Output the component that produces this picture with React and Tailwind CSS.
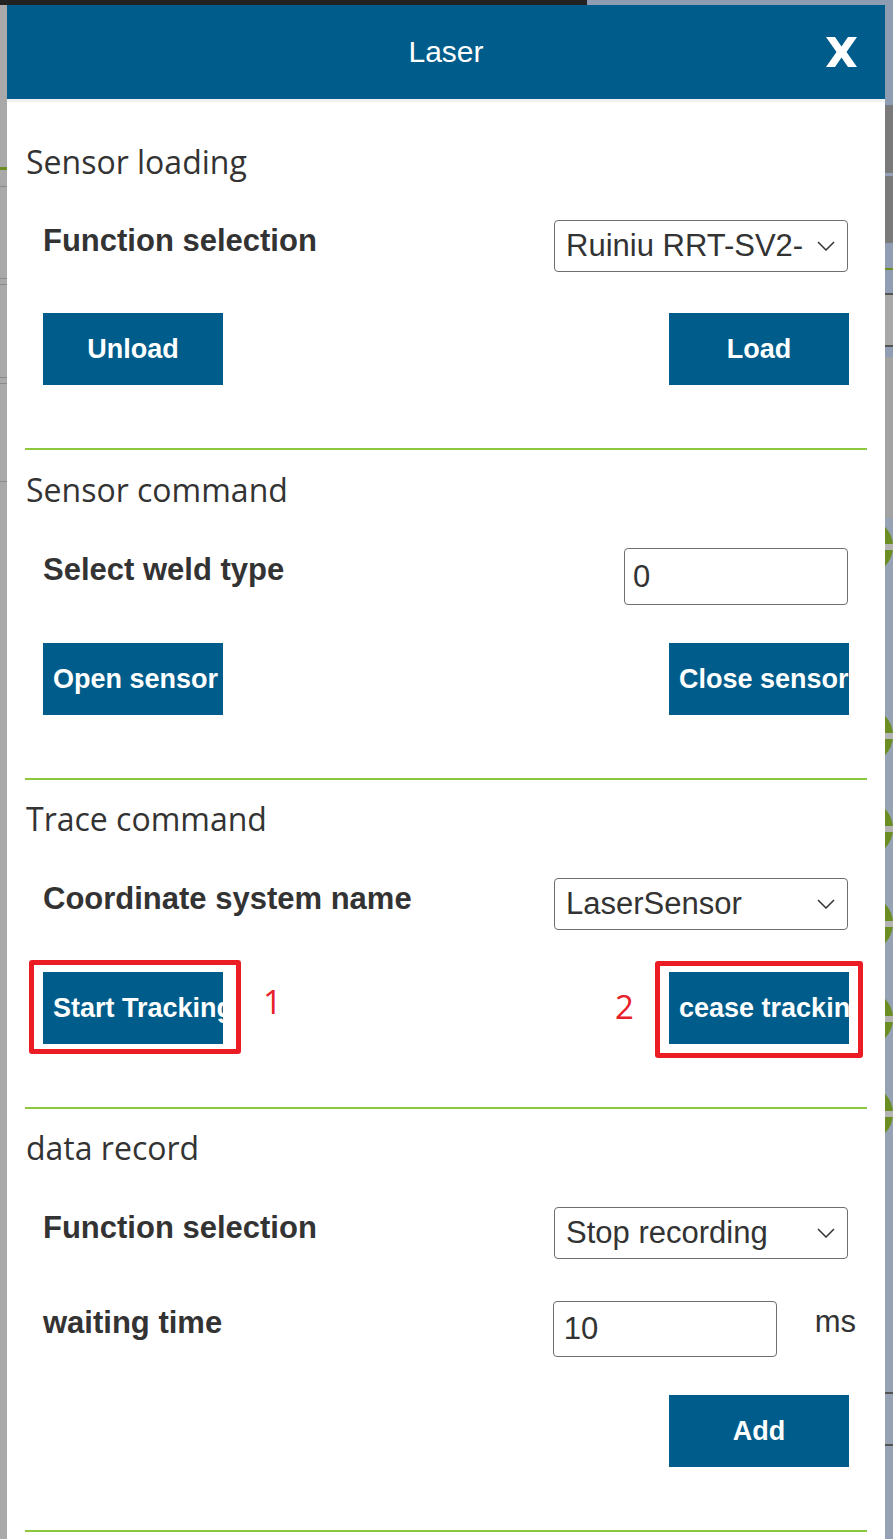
import React from 'react';

const sans = "font-['Liberation_Sans',Arial,sans-serif]";
const title = "font-['Open_Sans','Noto_Sans',sans-serif] text-[32px] leading-[40px] text-[#333] pl-px";
const label = `${sans} font-bold text-[31px] leading-[40px] text-[#333]`;

const Chevron = () => (
  <svg width="18" height="10" viewBox="0 0 18 10" className="shrink-0">
    <polyline points="1,1 9,9 17,1" fill="none" stroke="#333" strokeWidth="1.5" />
  </svg>
);

const Select = ({ value, className = '' }) => (
  <div className={`h-[52px] w-[294px] flex items-center pl-[11px] pr-[12px] border border-[#6e6e6e] rounded-[4px] bg-white ${className}`}>
    <span className={`flex-1 min-w-0 overflow-hidden whitespace-nowrap ${sans} text-[31px] leading-[40px] text-[#333]`}>{value}</span>
    <span className="w-[13px] shrink-0" />
    <Chevron />
  </div>
);

const Input = ({ value, className = '' }) => (
  <div className={`w-[224px] flex items-center border border-[#6e6e6e] rounded-[4px] bg-white ${sans} text-[31px] leading-[40px] text-[#333] ${className}`}>
    {value}
  </div>
);

const Button = ({ children }) => (
  <div className={`w-[180px] h-[72px] bg-[#005d8b] text-white font-bold text-[27px] leading-[72px] px-[10px] text-center whitespace-nowrap overflow-hidden ${sans}`}>
    {children}
  </div>
);

const Divider = ({ className = '' }) => <div className={`h-[2px] bg-[#8dc63f] ${className}`} />;

const Mark = ({ n, boxClass, numClass }) => (
  <>
    <div className={`absolute border-[5px] border-[#ec1c24] rounded-[3px] ${boxClass}`} />
    <div className={`absolute font-['Open_Sans',sans-serif] text-[33px] leading-[40px] text-[#e8202a] ${numClass}`}>{n}</div>
  </>
);

const RightStrip = () => (
  <div className="w-[8px] shrink-0 overflow-hidden flex flex-col bg-[#97a2b5]">
    <div className="h-[100px] shrink-0 bg-[#8f9db3]" />
    <div className="h-[68px] shrink-0 bg-[#7a7a7a]" />
    <div className="h-[3px] shrink-0 bg-[#95a0b3]" />
    <div className="h-[67px] shrink-0 bg-[#7a7a7a]" />
    <div className="h-[25px] shrink-0 bg-[#919db3]" />
    <div className="h-[2px] shrink-0 bg-[#6b8e23]" />
    <div className="h-[23px] shrink-0 bg-[#919db3]" />
    <div className="h-[2px] shrink-0 bg-[#555]" />
    <div className="h-[50px] shrink-0 bg-[#a8a8a8]" />
    <div className="h-[2px] shrink-0 bg-[#555]" />
    <div className="h-[10px] shrink-0 bg-[#919db3]" />
    <div className="h-[161px] shrink-0 bg-[#a3a3a3]" />
    {[0, 132, 36, 38, 38, 38].map((m, i) => (
      <div key={i} style={{ marginTop: m }} className="h-[57px] w-[57px] shrink-0 -ml-[49px] rounded-full bg-[#6b8e23] flex items-center">
        <div className="h-[6px] w-full bg-[#b4b4b4]" />
      </div>
    ))}
    <div className="mt-[250px] h-[2px] shrink-0 bg-[#555]" />
    <div className="mt-[50px] h-[2px] shrink-0 bg-[#555]" />
  </div>
);

const LeftStrip = () => (
  <div className="w-[7px] shrink-0 bg-[#a9a9a9] flex flex-col">
    <div className="mt-[162px] h-[3px] bg-[#6b8e23]" />
    <div className="mt-[16px] h-px bg-[#8a8a8a]" />
    <div className="mt-[91px] h-px bg-[#8a8a8a]" />
    <div className="mt-[5px] h-px bg-[#8a8a8a]" />
    <div className="mt-[92px] h-px bg-[#8a8a8a]" />
    <div className="mt-[5px] h-px bg-[#8a8a8a]" />
    <div className="mt-[97px] h-px bg-[#8a8a8a]" />
  </div>
);

export default function App() {
  return (
    <div className="w-[893px] h-[1539px] overflow-hidden flex flex-col bg-[#a9a9a9]">
      <div className="h-[5px] flex shrink-0">
        <div className="w-[587px] bg-[#222]" />
        <div className="flex-1 bg-[#8f9db3]" />
      </div>
      <div className="flex flex-1 min-h-0">
        <LeftStrip />
        <div className="w-[878px] shrink-0 bg-white flex flex-col">
          <div className="h-[94px] shrink-0 bg-[#005d8b] flex items-center justify-center relative">
            <span className={`${sans} text-white text-[30px] leading-[40px]`}>Laser</span>
            <svg width="31" height="30" viewBox="0 0 31 30" className="absolute right-[28px] top-[32px]">
              <polygon points="0,0 9,0 15.5,9.5 22,0 31,0 20.5,15 31,30 22,30 15.5,20.5 9,30 0,30 10.5,15" fill="#fff" />
            </svg>
          </div>
          <div className="h-[3px] shrink-0 bg-[#f1f1f1]" />

          <div className="px-[18px] pt-[40px] flex flex-col">
            {/* Sensor loading */}
            <div className={title}>Sensor loading</div>
            <div className="px-[18px] mt-[38px] flex justify-between items-start">
              <div className={`${label} mt-px`}>Function selection</div>
              <Select value="Ruiniu RRT-SV2-B" className="mr-px" />
            </div>
            <div className="px-[18px] mt-[41px] flex justify-between">
              <Button>Unload</Button>
              <Button>Load</Button>
            </div>
            <Divider className="mt-[63px]" />

            {/* Sensor command */}
            <div className={`${title} mt-[20px]`}>Sensor command</div>
            <div className="px-[18px] mt-[38px] flex justify-between items-start">
              <div className={`${label} mt-[2px]`}>Select weld type</div>
              <Input value="0" className="h-[57px] pl-[8px] mr-px" />
            </div>
            <div className="px-[18px] mt-[38px] flex justify-between">
              <Button>Open sensor</Button>
              <Button>Close sensor</Button>
            </div>
            <Divider className="mt-[63px]" />

            {/* Trace command */}
            <div className={`${title} mt-[19px]`}>Trace command</div>
            <div className="px-[18px] mt-[39px] flex justify-between items-start">
              <div className={`${label} mt-px`}>Coordinate system name</div>
              <Select value="LaserSensor" className="mr-px" />
            </div>
            <div className="px-[18px] mt-[42px] flex justify-between">
              <div className="relative">
                <Button>Start Tracking</Button>
                <Mark n="1" boxClass="-left-[14px] -top-[12px] w-[212px] h-[94px]" numClass="left-[220px] top-[10px]" />
              </div>
              <div className="relative">
                <Button>cease tracking</Button>
                <Mark n="2" boxClass="-left-[14px] -top-[11px] w-[208px] h-[97px]" numClass="-left-[54px] top-[15px]" />
              </div>
            </div>
            <Divider className="mt-[63px]" />

            {/* data record */}
            <div className={`${title} mt-[19px]`}>data record</div>
            <div className="px-[18px] mt-[39px] flex justify-between items-start">
              <div className={`${label} mt-px`}>Function selection</div>
              <Select value="Stop recording" className="mr-px" />
            </div>
            <div className="px-[18px] mt-[42px] flex justify-between items-start">
              <div className={`${label} mt-[2px]`}>waiting time</div>
              <div className="flex items-start -mr-[7px]">
                <Input value="10" className="h-[56px] pl-[10px]" />
                <span className={`${sans} text-[31px] leading-[40px] text-[#333] ml-[38px] mt-[1px]`}>ms</span>
              </div>
            </div>
            <div className="px-[18px] mt-[38px] flex justify-end">
              <Button>Add</Button>
            </div>
            <Divider className="mt-[63px]" />
          </div>
        </div>
        <RightStrip />
      </div>
    </div>
  );
}
